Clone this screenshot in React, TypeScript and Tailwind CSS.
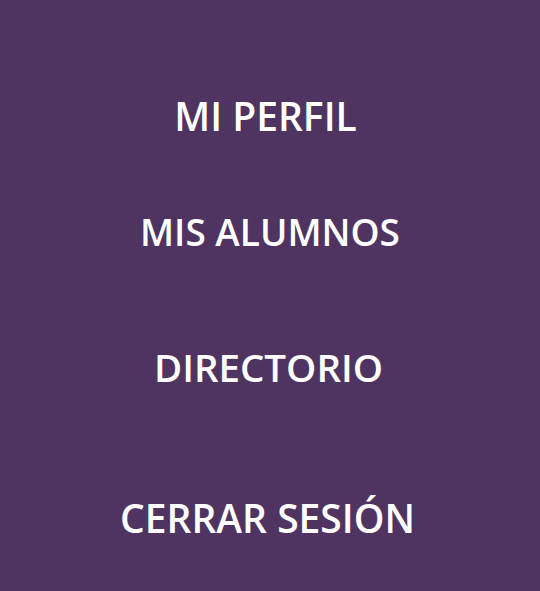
export default function App() {
  return (
    <div className="w-[540px] h-[591px] bg-[#4f3360] flex flex-col items-center text-white leading-none font-semibold text-[39px]" style={{ fontFamily: '"Open Sans", Lato, sans-serif' }}>
      <div className="mt-[96px] pr-[9px]">MI PERFIL</div>
      <div className="mt-[78px] text-[37px]">MIS ALUMNOS</div>
      <div className="mt-[98px] pr-[3px] text-[38.5px]">DIRECTORIO</div>
      <div className="mt-[111px] pr-[5px]">CERRAR SESIÓN</div>
    </div>
  );
}
